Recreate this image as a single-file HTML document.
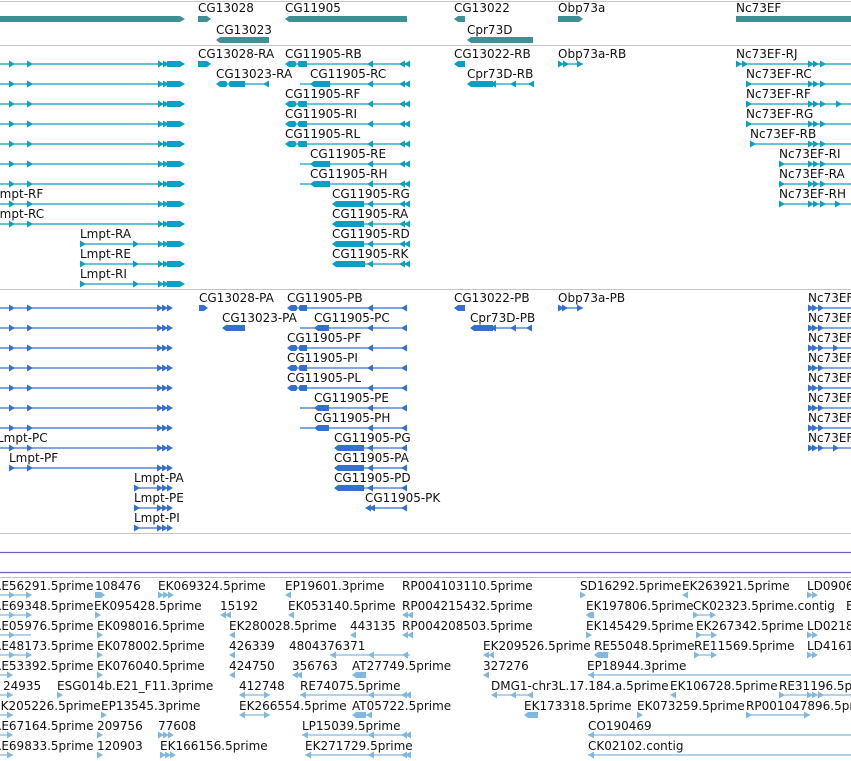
<!DOCTYPE html>
<html><head><meta charset="utf-8"><style>
html,body{margin:0;padding:0;background:#fff;width:851px;height:761px;overflow:hidden}
svg{display:block}
text{font-family:"DejaVu Sans","Liberation Sans",sans-serif;font-size:12px;letter-spacing:0;fill:#111}
.c{stroke:#0a9fc3;stroke-width:1.3;fill:none}
.b{stroke:#3370d0;stroke-width:1.3;fill:none}
.l{stroke:#80b8e0;stroke-width:1.3;fill:none}
</style></head><body>
<svg width="851" height="761" viewBox="0 0 851 761" xmlns="http://www.w3.org/2000/svg">
<defs>
<path id="rc" d="M0,-3.5L6,0L0,3.5Z" fill="#0a9fc3"/>
<path id="lc" d="M6,-3.5L0,0L6,3.5Z" fill="#0a9fc3"/>
<path id="rb" d="M0,-3.5L6,0L0,3.5Z" fill="#3370d0"/>
<path id="lb" d="M6,-3.5L0,0L6,3.5Z" fill="#3370d0"/>
<path id="rl" d="M0,-3.5L6,0L0,3.5Z" fill="#80b8e0"/>
<path id="ll" d="M6,-3.5L0,0L6,3.5Z" fill="#80b8e0"/>
<g id="LC"><path class="c" d="M0,0H170"/><use href="#rc" x="158"/><use href="#rc" x="163"/><path d="M167,-3H180L185,0L180,3H167Z" fill="#0a9fc3"/></g>
<g id="LB"><path class="b" d="M0,0H170"/><use href="#rb" x="157"/><use href="#rb" x="162"/><use href="#rb" x="167"/></g>
<g id="GC"><path class="c" d="M300,0H410"/><use href="#lc" x="367"/><use href="#lc" x="399"/><use href="#lc" x="404"/></g>
<g id="GB"><path class="b" d="M300,0H406"/><use href="#lb" x="367"/><use href="#lb" x="401"/></g>
<g id="NC"><path class="c" d="M0,0H120"/><use href="#rc" x="0"/><use href="#rc" x="72"/><use href="#rc" x="77"/><use href="#rc" x="84"/></g>
</defs>

<path d="M0,1.5H851M0,45.5H851M0,289.5H851M0,533.5H851M0,577.5H851" stroke="#c4c4c4" stroke-width="1"/>
<path d="M0,552.5H851M0,572.5H851" stroke="#7a5cc0" stroke-width="1.2"/>

<g fill="#3f8f94">
<path d="M0,16H180L185,19L180,22H0Z"/>
<path d="M198,16H207L211,19L207,22H198Z"/>
<path d="M289,16H407V22H289L285,19Z"/>
<path d="M220,37H269V43H220L216,40Z"/>
<path d="M458,16H465V22H458L454,19Z"/>
<path d="M471,37H533V43H471L467,40Z"/>
<path d="M558,16H579L583,19L579,22H558Z"/>
<path d="M736,16H851V22H736Z"/>
</g>
<text x="198" y="12">CG13028</text><text x="285" y="12">CG11905</text>
<text x="216" y="34">CG13023</text><text x="454" y="12">CG13022</text>
<text x="467" y="34">Cpr73D</text><text x="558" y="12">Obp73a</text><text x="736" y="12">Nc73EF</text>

<g>
<g transform="translate(0,64)"><use href="#LC"/><use href="#rc" x="9"/><use href="#rc" x="27"/></g>
<g transform="translate(0,84)"><use href="#LC"/><use href="#rc" x="9"/><use href="#rc" x="27"/></g>
<g transform="translate(0,104)"><use href="#LC"/><use href="#rc" x="9"/><use href="#rc" x="27"/></g>
<g transform="translate(0,124)"><use href="#LC"/><use href="#rc" x="9"/><use href="#rc" x="27"/></g>
<g transform="translate(0,144)"><use href="#LC"/><use href="#rc" x="9"/><use href="#rc" x="27"/></g>
<g transform="translate(0,164)"><use href="#LC"/><use href="#rc" x="9"/><use href="#rc" x="27"/></g>
<g transform="translate(0,184)"><use href="#LC"/><use href="#rc" x="9"/><use href="#rc" x="27"/></g>
<g transform="translate(0,204)"><use href="#LC"/><use href="#rc" x="9"/><use href="#rc" x="27"/></g>
<g transform="translate(0,224)"><use href="#LC"/><use href="#rc" x="9"/><use href="#rc" x="27"/></g>
<g transform="translate(0,244)"><use href="#LC"/><path d="M0,-4H80V4H0Z" fill="#fff"/><use href="#rc" x="80"/><use href="#rc" x="133"/></g>
<g transform="translate(0,264)"><use href="#LC"/><path d="M0,-4H80V4H0Z" fill="#fff"/><use href="#rc" x="80"/><use href="#rc" x="133"/></g>
<g transform="translate(0,284)"><use href="#LC"/><path d="M0,-4H80V4H0Z" fill="#fff"/><use href="#rc" x="80"/><use href="#rc" x="133"/></g>
</g>
<text x="-7" y="198">Lmpt-RF</text><text x="-7" y="218">Lmpt-RC</text>
<text x="80" y="238">Lmpt-RA</text><text x="80" y="258">Lmpt-RE</text><text x="80" y="278">Lmpt-RI</text>

<path d="M198,61H207L211,64L207,67H198Z" fill="#0a9fc3"/>
<text x="198" y="58">CG13028-RA</text>
<g fill="#0a9fc3">
<g transform="translate(0,64)"><use href="#GC"/><path d="M289,-3H295L297,0L299,-3H307V3H299L297,0L295,3H289L285,0Z"/></g>
<g transform="translate(0,84)"><use href="#GC"/><path d="M314,-3H330V3H314L310,0Z"/></g>
<g transform="translate(0,104)"><use href="#GC"/><path d="M289,-3H295L297,0L299,-3H307V3H299L297,0L295,3H289L285,0Z"/></g>
<g transform="translate(0,124)"><use href="#GC"/><path d="M289,-3H295L297,0L299,-3H307V3H299L297,0L295,3H289L285,0Z"/></g>
<g transform="translate(0,144)"><use href="#GC"/><path d="M289,-3H295L297,0L299,-3H307V3H299L297,0L295,3H289L285,0Z"/></g>
<g transform="translate(0,164)"><use href="#GC"/><path d="M314,-3H330V3H314L310,0Z"/></g>
<g transform="translate(0,184)"><use href="#GC"/><path d="M314,-3H330V3H314L310,0Z"/></g>
<g transform="translate(0,204)"><path class="c" d="M340,0H410"/><use href="#lc" x="367"/><use href="#lc" x="399"/><use href="#lc" x="404"/><path d="M336,-3H364V3H336L332,0Z"/></g>
<g transform="translate(0,224)"><path class="c" d="M340,0H410"/><use href="#lc" x="367"/><use href="#lc" x="399"/><use href="#lc" x="404"/><path d="M336,-3H364V3H336L332,0Z"/></g>
<g transform="translate(0,244)"><path class="c" d="M340,0H410"/><use href="#lc" x="367"/><use href="#lc" x="399"/><use href="#lc" x="404"/><path d="M336,-3H364V3H336L332,0Z"/></g>
<g transform="translate(0,264)"><path class="c" d="M340,0H410"/><use href="#lc" x="367"/><use href="#lc" x="399"/><use href="#lc" x="404"/><path d="M336,-3H365V3H336L332,0Z"/></g>
<g transform="translate(0,84)"><path class="c" d="M230,0H269"/><use href="#lc" x="263"/><path d="M220,-3H226L228,0L230,-3H245V3H230L228,0L226,3H220L216,0Z"/></g>
<path d="M458,61H465V67H458L454,64Z"/>
<g transform="translate(0,84)"><path class="c" d="M480,0H533"/><use href="#lc" x="490"/><use href="#lc" x="510"/><use href="#lc" x="528"/><path d="M471,-3H493V3H471L467,0Z"/></g>
<g transform="translate(0,64)"><path class="c" d="M558,0H583"/><use href="#rc" x="558"/><use href="#rc" x="563"/><use href="#rc" x="577"/></g>
</g>
<text x="285" y="58">CG11905-RB</text><text x="310" y="78">CG11905-RC</text>
<text x="285" y="98">CG11905-RF</text><text x="285" y="118">CG11905-RI</text><text x="285" y="138">CG11905-RL</text>
<text x="310" y="158">CG11905-RE</text><text x="310" y="178">CG11905-RH</text>
<text x="332" y="198">CG11905-RG</text><text x="332" y="218">CG11905-RA</text><text x="332" y="238">CG11905-RD</text><text x="332" y="258">CG11905-RK</text>
<text x="216" y="78">CG13023-RA</text><text x="454" y="58">CG13022-RB</text><text x="467" y="78">Cpr73D-RB</text><text x="558" y="58">Obp73a-RB</text>

<g transform="translate(736,64)"><use href="#NC"/><use href="#rc" x="6"/></g>
<g transform="translate(746,84)"><path class="c" d="M0,0H110"/><use href="#rc"/><use href="#rc" x="62"/><use href="#rc" x="67"/><use href="#rc" x="74"/></g>
<g transform="translate(746,104)"><path class="c" d="M0,0H110"/><use href="#rc"/><use href="#rc" x="62"/><use href="#rc" x="67"/><use href="#rc" x="74"/><use href="#rc" x="90"/></g>
<g transform="translate(746,124)"><path class="c" d="M0,0H110"/><use href="#rc"/><use href="#rc" x="62"/><use href="#rc" x="67"/><use href="#rc" x="74"/></g>
<g transform="translate(750,144)"><path class="c" d="M0,0H110"/><use href="#rc"/><use href="#rc" x="58"/><use href="#rc" x="63"/><use href="#rc" x="70"/></g>
<g transform="translate(779,164)"><path class="c" d="M0,0H80"/><use href="#rc"/><use href="#rc" x="29"/><use href="#rc" x="34"/><use href="#rc" x="41"/></g>
<g transform="translate(779,184)"><path class="c" d="M0,0H80"/><use href="#rc"/><use href="#rc" x="29"/><use href="#rc" x="34"/><use href="#rc" x="41"/></g>
<g transform="translate(779,204)"><path class="c" d="M0,0H80"/><use href="#rc"/><use href="#rc" x="29"/><use href="#rc" x="34"/><use href="#rc" x="41"/><use href="#rc" x="56"/></g>
<text x="736" y="58">Nc73EF-RJ</text><text x="746" y="78">Nc73EF-RC</text><text x="746" y="98">Nc73EF-RF</text>
<text x="746" y="118">Nc73EF-RG</text><text x="750" y="138">Nc73EF-RB</text><text x="779" y="158">Nc73EF-RI</text>
<text x="779" y="178">Nc73EF-RA</text><text x="779" y="198">Nc73EF-RH</text>

<g>
<g transform="translate(0,308)"><use href="#LB"/><use href="#rb" x="9"/><use href="#rb" x="27"/></g>
<g transform="translate(0,328)"><use href="#LB"/><use href="#rb" x="9"/><use href="#rb" x="27"/></g>
<g transform="translate(0,348)"><use href="#LB"/><use href="#rb" x="9"/><use href="#rb" x="27"/></g>
<g transform="translate(0,368)"><use href="#LB"/><use href="#rb" x="9"/><use href="#rb" x="27"/></g>
<g transform="translate(0,388)"><use href="#LB"/><use href="#rb" x="9"/><use href="#rb" x="27"/></g>
<g transform="translate(0,408)"><use href="#LB"/><use href="#rb" x="9"/><use href="#rb" x="27"/></g>
<g transform="translate(0,428)"><use href="#LB"/><use href="#rb" x="9"/><use href="#rb" x="27"/></g>
<g transform="translate(0,448)"><use href="#LB"/><use href="#rb" x="9"/><use href="#rb" x="27"/></g>
<g transform="translate(0,468)"><use href="#LB"/><path d="M0,-4H9V4H0Z" fill="#fff"/><use href="#rb" x="9"/><use href="#rb" x="27"/></g>
<g transform="translate(0,488)"><use href="#LB"/><path d="M0,-4H134V4H0Z" fill="#fff"/><use href="#rb" x="134"/></g>
<g transform="translate(0,508)"><use href="#LB"/><path d="M0,-4H134V4H0Z" fill="#fff"/><use href="#rb" x="134"/></g>
<g transform="translate(0,528)"><use href="#LB"/><path d="M0,-4H134V4H0Z" fill="#fff"/><use href="#rb" x="134"/></g>
</g>
<text x="-3" y="442">Lmpt-PC</text><text x="9" y="462">Lmpt-PF</text>
<text x="134" y="482">Lmpt-PA</text><text x="134" y="502">Lmpt-PE</text><text x="134" y="522">Lmpt-PI</text>

<g fill="#3370d0">
<path d="M199,305H204L208,308L204,311H199Z"/>
<g transform="translate(0,308)"><use href="#GB"/><path d="M291,-3H296L298,0L300,-3H307V3H300L298,0L296,3H291L287,0Z"/></g>
<g transform="translate(0,328)"><use href="#GB"/><path d="M318,-3H329V3H318L314,0Z"/></g>
<g transform="translate(0,348)"><use href="#GB"/><path d="M291,-3H296L298,0L300,-3H307V3H300L298,0L296,3H291L287,0Z"/></g>
<g transform="translate(0,368)"><use href="#GB"/><path d="M291,-3H296L298,0L300,-3H307V3H300L298,0L296,3H291L287,0Z"/></g>
<g transform="translate(0,388)"><use href="#GB"/><path d="M291,-3H296L298,0L300,-3H307V3H300L298,0L296,3H291L287,0Z"/></g>
<g transform="translate(0,408)"><use href="#GB"/><path d="M318,-3H329V3H318L314,0Z"/></g>
<g transform="translate(0,428)"><use href="#GB"/><path d="M318,-3H329V3H318L314,0Z"/></g>
<g transform="translate(0,448)"><path class="b" d="M340,0H406"/><use href="#lb" x="367"/><use href="#lb" x="401"/><path d="M338,-3H364V3H338L334,0Z"/></g>
<g transform="translate(0,468)"><path class="b" d="M340,0H406"/><use href="#lb" x="367"/><use href="#lb" x="401"/><path d="M338,-3H364V3H338L334,0Z"/></g>
<g transform="translate(0,488)"><path class="b" d="M340,0H406"/><use href="#lb" x="367"/><use href="#lb" x="401"/><path d="M338,-3H364V3H338L334,0Z"/></g>
<g transform="translate(0,508)"><path class="b" d="M366,0H406"/><use href="#lb" x="365"/><use href="#lb" x="369"/><use href="#lb" x="401"/></g>
<g transform="translate(0,328)"><path d="M226,-3H245V3H226L222,0Z"/><use href="#lb" x="222"/></g>
<path d="M458,305H465V311H458L454,308Z"/>
<g transform="translate(0,328)"><path class="b" d="M480,0H531"/><use href="#lb" x="490"/><use href="#lb" x="510"/><use href="#lb" x="526"/><path d="M474,-3H493V3H474L470,0Z"/></g>
<g transform="translate(0,308)"><path class="b" d="M558,0H583"/><use href="#rb" x="558"/><use href="#rb" x="562"/><use href="#rb" x="577"/></g>
</g>
<text x="199" y="302">CG13028-PA</text><text x="287" y="302">CG11905-PB</text><text x="314" y="322">CG11905-PC</text>
<text x="287" y="342">CG11905-PF</text><text x="287" y="362">CG11905-PI</text><text x="287" y="382">CG11905-PL</text>
<text x="314" y="402">CG11905-PE</text><text x="314" y="422">CG11905-PH</text>
<text x="334" y="442">CG11905-PG</text><text x="334" y="462">CG11905-PA</text><text x="334" y="482">CG11905-PD</text><text x="365" y="502">CG11905-PK</text>
<text x="222" y="322">CG13023-PA</text><text x="454" y="302">CG13022-PB</text><text x="470" y="322">Cpr73D-PB</text><text x="558" y="302">Obp73a-PB</text>
<g>
<g transform="translate(808,308)"><path class="b" d="M0,0H45"/><use href="#rb"/><use href="#rb" x="4"/><use href="#rb" x="10"/></g>
<g transform="translate(808,328)"><path class="b" d="M0,0H45"/><use href="#rb"/><use href="#rb" x="4"/><use href="#rb" x="10"/></g>
<g transform="translate(808,348)"><path class="b" d="M0,0H45"/><use href="#rb"/><use href="#rb" x="4"/><use href="#rb" x="10"/><use href="#rb" x="25"/></g>
<g transform="translate(808,368)"><path class="b" d="M0,0H45"/><use href="#rb"/><use href="#rb" x="4"/><use href="#rb" x="10"/></g>
<g transform="translate(808,388)"><path class="b" d="M0,0H45"/><use href="#rb"/><use href="#rb" x="4"/><use href="#rb" x="10"/></g>
<g transform="translate(808,408)"><path class="b" d="M0,0H45"/><use href="#rb"/><use href="#rb" x="4"/><use href="#rb" x="10"/></g>
<g transform="translate(808,428)"><path class="b" d="M0,0H45"/><use href="#rb"/><use href="#rb" x="4"/><use href="#rb" x="10"/></g>
<g transform="translate(808,448)"><path class="b" d="M0,0H45"/><use href="#rb"/><use href="#rb" x="4"/><use href="#rb" x="10"/><use href="#rb" x="25"/></g>
</g>
<text x="808" y="302">Nc73EF</text><text x="808" y="322">Nc73EF</text><text x="808" y="342">Nc73EF</text><text x="808" y="362">Nc73EF</text>
<text x="808" y="382">Nc73EF</text><text x="808" y="402">Nc73EF</text><text x="808" y="422">Nc73EF</text><text x="808" y="442">Nc73EF</text>

<g>
<path class="l" d="M0,595H31M0,615H31M0,635H31M0,655H31M0,675H10M0,695H13M0,715H13M0,735H10M0,755H13"/>
<use href="#rl" x="9" y="595"/><use href="#rl" x="26" y="595"/><use href="#rl" x="9" y="615"/><use href="#rl" x="26" y="615"/>
<use href="#rl" x="9" y="635"/><use href="#rl" x="9" y="655"/><use href="#rl" x="26" y="655"/><use href="#rl" x="7" y="675"/><use href="#rl" x="7" y="695"/>
<use href="#rl" x="7" y="715"/><use href="#rl" x="7" y="735"/><use href="#rl" x="7" y="755"/>
<path d="M95,592H101L105,595L101,598H95Z" fill="#80b8e0"/>
<use href="#rl" x="95" y="615"/><use href="#rl" x="97" y="635"/><use href="#rl" x="97" y="655"/><use href="#rl" x="97" y="675"/><use href="#rl" x="57" y="695"/>
<use href="#rl" x="101" y="715"/><use href="#rl" x="97" y="735"/><use href="#rl" x="97" y="755"/>
<use href="#rl" x="158" y="595"/><use href="#rl" x="163" y="595"/><use href="#rl" x="168" y="595"/>
<use href="#rl" x="158" y="735"/><use href="#rl" x="163" y="735"/><use href="#rl" x="168" y="735"/>
<use href="#rl" x="160" y="755"/><use href="#rl" x="165" y="755"/><use href="#rl" x="170" y="755"/>
<use href="#ll" x="220" y="615"/><use href="#ll" x="225" y="615"/><use href="#ll" x="229" y="635"/><use href="#ll" x="229" y="655"/><use href="#ll" x="229" y="675"/>
<path class="l" d="M240,695H270M240,715H270"/><use href="#ll" x="239" y="695"/><use href="#rl" x="264" y="695"/><use href="#ll" x="239" y="715"/><use href="#rl" x="264" y="715"/>
<use href="#ll" x="285" y="595"/><use href="#ll" x="288" y="615"/><use href="#ll" x="350" y="635"/><use href="#ll" x="292" y="675"/><use href="#ll" x="296" y="675"/>
<path class="l" d="M330,655H410M300,695H410M302,735H410M305,755H410"/>
<use href="#ll" x="330" y="655"/><use href="#ll" x="368" y="655"/><use href="#ll" x="402" y="655"/>
<path d="M356,672H366V678H356L352,675Z" fill="#80b8e0"/><path d="M356,712H366V718H356L352,715Z" fill="#80b8e0"/><path class="l" d="M360,715H372"/><use href="#ll" x="366" y="715"/>
<use href="#ll" x="300" y="695"/><use href="#ll" x="368" y="695"/><use href="#ll" x="401" y="695"/><use href="#ll" x="405" y="695"/>
<use href="#ll" x="302" y="735"/><use href="#ll" x="368" y="735"/><use href="#ll" x="401" y="735"/><use href="#ll" x="405" y="735"/>
<use href="#ll" x="305" y="755"/><use href="#ll" x="368" y="755"/><use href="#ll" x="401" y="755"/><use href="#ll" x="405" y="755"/>
<use href="#ll" x="402" y="615"/><use href="#ll" x="407" y="615"/><use href="#ll" x="402" y="635"/><use href="#ll" x="407" y="635"/>
<use href="#ll" x="483" y="675"/><use href="#ll" x="483" y="655"/><use href="#ll" x="488" y="655"/>
<path class="l" d="M492,695H532"/><use href="#ll" x="491" y="695"/><use href="#ll" x="510" y="695"/><use href="#ll" x="527" y="695"/>
<path d="M528,712H538V718H528L524,715Z" fill="#80b8e0"/>
<use href="#rl" x="580" y="595"/><path d="M590,612H594V618H590L586,615Z" fill="#80b8e0"/>
<use href="#rl" x="586" y="635"/><path d="M598,652H608V658H598L594,655Z" fill="#80b8e0"/>
<path class="l" d="M588,675H851M588,735H851M588,755H851M779,695H851M746,715H810M696,655H716M693,615H715M696,635H716"/>
<use href="#ll" x="588" y="675"/><use href="#ll" x="588" y="735"/><use href="#ll" x="588" y="755"/>
<use href="#rl" x="637" y="715"/><use href="#ll" x="670" y="695"/><use href="#ll" x="682" y="595"/>
<use href="#rl" x="693" y="615"/><use href="#rl" x="710" y="615"/><use href="#rl" x="696" y="635"/><use href="#rl" x="711" y="635"/>
<use href="#rl" x="694" y="655"/><use href="#rl" x="711" y="655"/><use href="#rl" x="746" y="715"/><use href="#rl" x="804" y="715"/>
<use href="#rl" x="779" y="695"/><use href="#rl" x="807" y="695"/><use href="#rl" x="812" y="695"/><use href="#rl" x="818" y="695"/>
<use href="#rl" x="807" y="595"/><use href="#rl" x="812" y="595"/><use href="#rl" x="807" y="655"/><use href="#rl" x="812" y="655"/><use href="#rl" x="807" y="635"/><use href="#rl" x="812" y="635"/>
</g>
<g>
<text x="-7" y="590">RE56291.5prime</text><text x="95" y="590">108476</text><text x="158" y="590">EK069324.5prime</text><text x="285" y="590">EP19601.3prime</text><text x="402" y="590">RP004103110.5prime</text><text x="580" y="590">SD16292.5prime</text><text x="682" y="590">EK263921.5prime</text><text x="807" y="590">LD0906</text>
<text x="-7" y="610">RE69348.5prime</text><text x="94" y="610">EK095428.5prime</text><text x="220" y="610">15192</text><text x="288" y="610">EK053140.5prime</text><text x="402" y="610">RP004215432.5prime</text><text x="586" y="610">EK197806.5prime</text><text x="693" y="610">CK02323.5prime.contig</text><text x="846" y="610">E</text>
<text x="-7" y="630">RE05976.5prime</text><text x="97" y="630">EK098016.5prime</text><text x="229" y="630">EK280028.5prime</text><text x="350" y="630">443135</text><text x="402" y="630">RP004208503.5prime</text><text x="586" y="630">EK145429.5prime</text><text x="696" y="630">EK267342.5prime</text><text x="807" y="630">LD0218</text>
<text x="-7" y="650">RE48173.5prime</text><text x="97" y="650">EK078002.5prime</text><text x="229" y="650">426339</text><text x="289" y="650">4804376371</text><text x="483" y="650">EK209526.5prime</text><text x="594" y="650">RE55048.5prime</text><text x="694" y="650">RE11569.5prime</text><text x="807" y="650">LD4161</text>
<text x="-7" y="670">RE53392.5prime</text><text x="97" y="670">EK076040.5prime</text><text x="229" y="670">424750</text><text x="292" y="670">356763</text><text x="352" y="670">AT27749.5prime</text><text x="483" y="670">327276</text><text x="587" y="670">EP18944.3prime</text>
<text x="3" y="690">24935</text><text x="57" y="690">ESG014b.E21_F11.3prime</text><text x="239" y="690">412748</text><text x="300" y="690">RE74075.5prime</text><text x="491" y="690">DMG1-chr3L.17.184.a.5prime</text><text x="670" y="690">EK106728.5prime</text><text x="779" y="690">RE31196.5prime</text>
<text x="-7" y="710">EK205226.5prime</text><text x="101" y="710">EP13545.3prime</text><text x="239" y="710">EK266554.5prime</text><text x="352" y="710">AT05722.5prime</text><text x="524" y="710">EK173318.5prime</text><text x="637" y="710">EK073259.5prime</text><text x="746" y="710">RP001047896.5prime</text>
<text x="-7" y="730">RE67164.5prime</text><text x="97" y="730">209756</text><text x="158" y="730">77608</text><text x="302" y="730">LP15039.5prime</text><text x="588" y="730">CO190469</text>
<text x="-7" y="750">RE69833.5prime</text><text x="97" y="750">120903</text><text x="160" y="750">EK166156.5prime</text><text x="305" y="750">EK271729.5prime</text><text x="588" y="750">CK02102.contig</text>
</g>
</svg>
</body></html>
